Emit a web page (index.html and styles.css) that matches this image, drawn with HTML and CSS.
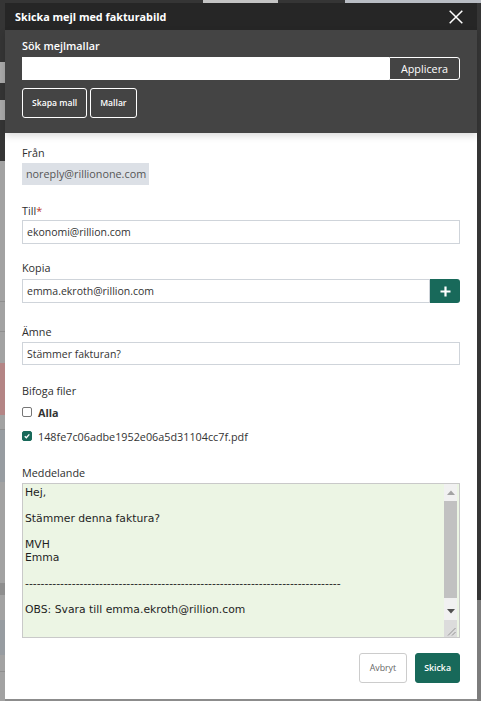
FILE: index.html
```html
<!DOCTYPE html>
<html lang="sv">
<head>
<meta charset="utf-8">
<title>Skicka mejl med fakturabild</title>
<link rel="stylesheet" href="styles.css">
</head>
<body>
<div class="page">
  <div class="strip strip-left">
    <div class="blk h62 dark"></div>
    <div class="blk h21 light"></div>
    <div class="blk h17 dark"></div>
    <div class="blk h20 light"></div>
    <div class="blk h41 dark"></div>
    <div class="blk h141 grey line"></div>
    <div class="blk h30 grey line"></div>
    <div class="blk h31 grey"></div>
    <div class="blk h52 pink"></div>
    <div class="blk h15 grey line"></div>
    <div class="blk h52 blue"></div>
    <div class="blk h38 grey"></div>
    <div class="blk h63 grey"></div>
    <div class="blk h12 mid-grey"></div>
    <div class="blk h25 grey"></div>
    <div class="blk h35 blue"></div>
    <div class="blk h17 grey line"></div>
    <div class="blk fill grey"></div>
  </div>
  <div class="center">
    <div class="topband">
      <div class="tb tb-dark1"></div>
      <div class="tb tb-light"></div>
      <div class="tb tb-dark2"></div>
      <div class="tb tb-text"></div>
    </div>
    <div class="center-fill"></div>
    <div class="center-bottom"></div>
  </div>
  <div class="strip strip-right">
    <div class="blk h3 pale"></div>
    <div class="blk h597 dark"></div>
    <div class="blk fill grey2"></div>
  </div>
</div>

<div class="modal" role="dialog" aria-labelledby="modal-title">
  <header class="modal-head">
    <h1 class="modal-title" id="modal-title">Skicka mejl med fakturabild</h1>
    <button class="close" type="button" aria-label="Stäng">
      <svg width="14" height="14" viewBox="0 0 14 14"><path d="M0.7 0.7L13.3 13.3M13.3 0.7L0.7 13.3" stroke="#ffffff" stroke-width="1.5" fill="none"/></svg>
    </button>
  </header>

  <section class="templates">
    <label class="tpl-label" for="tpl-search">Sök mejlmallar</label>
    <div class="tpl-search">
      <input class="tpl-input" id="tpl-search" type="text">
      <button class="btn-apply" type="button">Applicera</button>
    </div>
    <div class="tpl-actions">
      <button class="btn-outline" type="button">Skapa mall</button>
      <button class="btn-outline" type="button">Mallar</button>
    </div>
  </section>

  <form class="modal-body">
    <div class="group g-from">
      <div class="label">Från</div>
      <div class="readonly">noreply@rillionone.com</div>
    </div>

    <div class="group g-to">
      <label class="label" for="to">Till<span class="req">*</span></label>
      <input class="field" id="to" type="text" value="ekonomi@rillion.com">
    </div>

    <div class="group g-cc">
      <label class="label" for="cc">Kopia</label>
      <div class="cc-row">
        <input class="field cc-field" id="cc" type="text" value="emma.ekroth@rillion.com">
        <button class="btn-plus" type="button" aria-label="Lägg till">
          <svg width="11" height="11" viewBox="0 0 11 11"><path d="M5.5 0.5V10.5M0.5 5.5H10.5" stroke="#ffffff" stroke-width="2.2" fill="none"/></svg>
        </button>
      </div>
    </div>

    <div class="group g-subject">
      <label class="label" for="subject">Ämne</label>
      <input class="field" id="subject" type="text" value="Stämmer fakturan?">
    </div>

    <div class="group g-files">
      <div class="label">Bifoga filer</div>
      <div class="check-row first">
        <span class="box"></span>
        <span class="check-text bold">Alla</span>
      </div>
      <div class="check-row">
        <span class="box checked">
          <svg width="10" height="10" viewBox="0 0 10 10"><path d="M2.2 5.2L4.2 7.2L7.9 2.9" stroke="#ffffff" stroke-width="1.7" fill="none"/></svg>
        </span>
        <span class="check-text">148fe7c06adbe1952e06a5d31104cc7f.pdf</span>
      </div>
    </div>

    <div class="group g-message">
      <div class="label">Meddelande</div>
      <div class="message">
        <div class="message-text">Hej,

Stämmer denna faktura?

MVH
Emma

---------------------------------------------------------------------------------

OBS: Svara till emma.ekroth@rillion.com</div>
        <div class="scrollbar">
          <div class="sb-btn">
            <svg width="8" height="5" viewBox="0 0 8 5"><path d="M0 5L4 0.5L8 5Z" fill="#a3a3a3"/></svg>
          </div>
          <div class="sb-track">
            <div class="sb-thumb"></div>
          </div>
          <div class="sb-btn">
            <svg width="8" height="5" viewBox="0 0 8 5"><path d="M0 0L4 4.5L8 0Z" fill="#505050"/></svg>
          </div>
          <div class="sb-corner">
            <svg width="9" height="9" viewBox="0 0 9 9"><path d="M8.5 1L1 8.5M8.5 5L5 8.5" stroke="#8a8a8a" stroke-width="0.9" fill="none"/></svg>
          </div>
        </div>
      </div>
    </div>

    <div class="footer">
      <button class="btn btn-cancel" type="button">Avbryt</button>
      <button class="btn btn-send" type="button">Skicka</button>
    </div>
  </form>
</div>
</body>
</html>
```

FILE: styles.css
```css
* { box-sizing: border-box; margin: 0; padding: 0; }
html, body { width: 481px; height: 701px; overflow: hidden; }
body {
  font-family: "Open Sans", "Liberation Sans", sans-serif;
  font-size: 10.8px;
  color: #333333;
  background: #a2a2a2;
}

/* backdrop page (dimmed) */
.page { display: flex; width: 481px; height: 701px; }
.strip { display: flex; flex-direction: column; }
.strip-left { width: 5px; }
.strip-right { width: 4px; }
.center { flex: 1; display: flex; flex-direction: column; background: #353535; }
.blk { flex: none; }
.blk.fill { flex: 1; }
.h3 { height: 3px; } .h12 { height: 12px; } .h15 { height: 15px; } .h17 { height: 17px; }
.h20 { height: 20px; } .h21 { height: 21px; } .h25 { height: 25px; } .h30 { height: 30px; }
.h31 { height: 31px; } .h35 { height: 35px; } .h38 { height: 38px; } .h41 { height: 41px; }
.h52 { height: 52px; } .h62 { height: 62px; } .h63 { height: 63px; } .h141 { height: 141px; }
.h597 { height: 597px; }
.dark { background: #353535; }
.light { background: #a9a9a9; }
.grey { background: #a2a2a2; }
.grey2 { background: #7c7c7c; }
.mid-grey { background: #8e8e8e; }
.pink { background: #b48585; }
.blue { background: #979ca1; }
.pale { background: #b9bdc4; }
.line { border-bottom: 1px solid #8f8f8f; }
.topband { display: flex; height: 3px; }
.tb-dark1 { width: 198px; background: #353535; }
.tb-light { width: 75px; background: #c4c4c4; }
.tb-dark2 { width: 67px; background: #353535; }
.tb-text { flex: 1; background: #b9bdc4; }
.center-fill { flex: 1; }
.center-bottom { height: 2px; background: #8c8c8c; }

/* modal (overlay) */
.modal {
  position: absolute;
  top: 3px;
  left: 5px;
  width: 472px;
  height: 696px;
  background: #ffffff;
  display: flex;
  flex-direction: column;
}

.modal-head {
  height: 27px;
  background: #262626;
  display: flex;
  align-items: center;
  justify-content: space-between;
  padding: 0 14px 0 10px;
}
.modal-title {
  font-size: 10.8px;
  font-weight: 700;
  color: #ffffff;
  line-height: 14px;
}
.close {
  width: 14px;
  height: 14px;
  border: none;
  background: transparent;
  display: flex;
  align-items: center;
  justify-content: center;
}

.templates {
  position: relative;
  z-index: 1;
  background: #444444;
  padding: 9px 17px 15px 17px;
  box-shadow: 0 3px 7px rgba(0, 0, 0, 0.14);
}
.tpl-label {
  display: block;
  color: #ffffff;
  font-weight: 600;
  line-height: 14px;
}
.tpl-search {
  margin-top: 4px;
  display: flex;
  height: 23px;
}
.tpl-input {
  flex: 1;
  height: 23px;
  border: none;
  background: #ffffff;
  outline: none;
}
.btn-apply {
  width: 71px;
  height: 23px;
  border: 1px solid #ffffff;
  border-radius: 0 3px 3px 0;
  background: transparent;
  color: #ffffff;
  font-family: "Open Sans", sans-serif;
  font-size: 10.8px;
}
.tpl-actions {
  margin-top: 8px;
  display: flex;
  gap: 3px;
}
.btn-outline {
  height: 30px;
  padding: 0 9px;
  border: 1px solid #ffffff;
  border-radius: 3px;
  background: transparent;
  color: #ffffff;
  font-family: "Open Sans", sans-serif;
  font-size: 8.6px;
  font-weight: 600;
}

.modal-body {
  padding: 13px 17px 0 17px;
  display: flex;
  flex-direction: column;
}
.label {
  display: block;
  line-height: 14px;
  color: #2e2e2e;
}
.req { color: #c0392b; }

.g-to { margin-top: 19px; }
.g-cc { margin-top: 17px; }
.g-subject { margin-top: 22px; }
.g-files { margin-top: 19px; }
.g-message { margin-top: 22px; }

.readonly {
  margin-top: 3px;
  width: 127px;
  height: 22px;
  line-height: 22px;
  padding: 0 4px;
  background: #dce0e6;
  color: #555555;
  white-space: nowrap;
}
.field {
  display: block;
  margin-top: 2px;
  width: 100%;
  height: 24px;
  border: 1px solid #cfd4da;
  padding: 0 4px;
  font-family: "Open Sans", sans-serif;
  font-size: 10.5px;
  color: #333333;
  background: #ffffff;
  outline: none;
}
.g-subject .field { margin-top: 3px; height: 23px; }
.cc-row { display: flex; margin-top: 4px; }
.cc-row .field { margin-top: 0; flex: 1; width: auto; }
.btn-plus {
  width: 30px;
  height: 24px;
  border: none;
  border-radius: 0 3px 3px 0;
  background: #18695a;
  display: flex;
  align-items: center;
  justify-content: center;
}

.check-row {
  display: flex;
  align-items: center;
  gap: 6px;
  height: 16px;
  margin-top: 8px;
}
.check-row.first { margin-top: 6px; }
.box {
  width: 10px;
  height: 10px;
  border: 1px solid #767676;
  border-radius: 2px;
  background: #ffffff;
  display: flex;
  align-items: center;
  justify-content: center;
}
.box.checked { background: #18695a; border-color: #18695a; }
.check-text { color: #333333; }
.check-text.bold { font-weight: 700; }

.message {
  margin-top: 3px;
  height: 155px;
  border: 1px solid #c9c9c9;
  background: #ecf5e4;
  display: flex;
}
.message-text {
  flex: 1;
  padding: 2px 2px;
  font-family: "DejaVu Sans", Verdana, sans-serif;
  font-size: 10.8px;
  line-height: 13px;
  color: #1e1e1e;
  white-space: pre;
  overflow: hidden;
}
.scrollbar {
  width: 13px;
  margin-right: 2px;
  display: flex;
  flex-direction: column;
  background: #f1f1f1;
}
.sb-btn {
  height: 17px;
  display: flex;
  align-items: center;
  justify-content: center;
}
.sb-track { flex: 1; display: flex; flex-direction: column; }
.sb-thumb { height: 97px; background: #c1c1c1; }
.sb-corner {
  height: 17px;
  background: #dcdcdc;
  display: flex;
  align-items: flex-end;
  justify-content: flex-end;
  padding: 0 1px 1px 0;
}

.footer {
  margin-top: 15px;
  display: flex;
  justify-content: flex-end;
  gap: 8px;
}
.btn {
  height: 30px;
  border-radius: 3px;
  font-family: "Open Sans", sans-serif;
  font-size: 8.8px;
}
.btn-cancel {
  padding: 0 10px;
  border: 1px solid #cccccc;
  background: #ffffff;
  color: #666666;
}
.btn-send {
  padding: 0 8px;
  border: 1px solid #18695a;
  background: #18695a;
  color: #ffffff;
  font-weight: 600;
}
```
